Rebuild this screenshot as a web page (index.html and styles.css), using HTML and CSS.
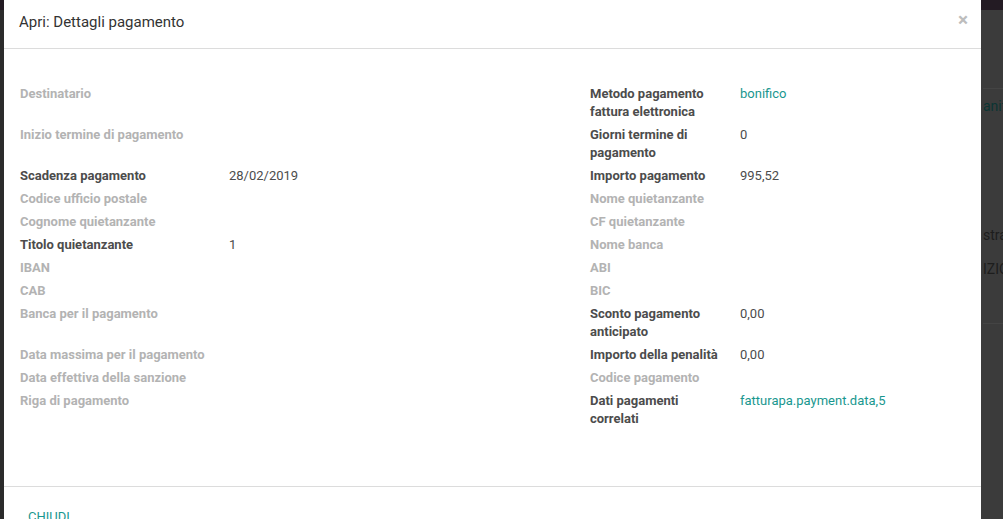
FILE: index.html
```html
<!DOCTYPE html>
<html lang="it">
  <head>
    <meta charset="UTF-8" />
    <title>Apri: Dettagli pagamento</title>
    <link rel="stylesheet" href="styles.css">
  </head>
  <body>
    <!-- page under the backdrop -->
    <div class="backdrop">
      <div class="bd-navbar"></div>
      <div class="bd-content">
        <div class="bd-row bd-first"><span class="bd-link">anifi</span></div>
        <div class="bd-row bd-stra">stra</div>
        <div class="bd-row bd-izio">IZIO</div>
        <div class="bd-row bd-last"></div>
      </div>
    </div>

    <div class="modal">
      <div class="modal-header">
        <h4 class="modal-title">Apri: Dettagli pagamento</h4>
        <span class="close">&times;</span>
      </div>

      <div class="modal-body">
        <table class="form-table">
          <colgroup>
            <col class="c-label-l">
            <col class="c-value-l">
            <col class="c-label-r">
            <col class="c-value-r">
          </colgroup>
          <tr>
            <td class="lbl empty">Destinatario</td>
            <td></td>
            <td class="lbl">Metodo pagamento fattura elettronica</td>
            <td><a class="link">bonifico</a></td>
          </tr>
          <tr>
            <td class="lbl empty">Inizio termine di pagamento</td>
            <td></td>
            <td class="lbl">Giorni termine di pagamento</td>
            <td>0</td>
          </tr>
          <tr>
            <td class="lbl">Scadenza pagamento</td>
            <td>28/02/2019</td>
            <td class="lbl">Importo pagamento</td>
            <td>995,52</td>
          </tr>
          <tr>
            <td class="lbl empty">Codice ufficio postale</td>
            <td></td>
            <td class="lbl empty">Nome quietanzante</td>
            <td></td>
          </tr>
          <tr>
            <td class="lbl empty">Cognome quietanzante</td>
            <td></td>
            <td class="lbl empty">CF quietanzante</td>
            <td></td>
          </tr>
          <tr>
            <td class="lbl">Titolo quietanzante</td>
            <td>1</td>
            <td class="lbl empty">Nome banca</td>
            <td></td>
          </tr>
          <tr>
            <td class="lbl empty">IBAN</td>
            <td></td>
            <td class="lbl empty">ABI</td>
            <td></td>
          </tr>
          <tr>
            <td class="lbl empty">CAB</td>
            <td></td>
            <td class="lbl empty">BIC</td>
            <td></td>
          </tr>
          <tr>
            <td class="lbl empty">Banca per il pagamento</td>
            <td></td>
            <td class="lbl">Sconto pagamento anticipato</td>
            <td>0,00</td>
          </tr>
          <tr>
            <td class="lbl empty">Data massima per il pagamento</td>
            <td></td>
            <td class="lbl">Importo della penalità</td>
            <td>0,00</td>
          </tr>
          <tr>
            <td class="lbl empty">Data effettiva della sanzione</td>
            <td></td>
            <td class="lbl empty">Codice pagamento</td>
            <td></td>
          </tr>
          <tr>
            <td class="lbl empty">Riga di pagamento</td>
            <td></td>
            <td class="lbl">Dati pagamenti correlati</td>
            <td><a class="link">fatturapa.payment.data,5</a></td>
          </tr>
        </table>
      </div>

      <div class="modal-footer">
        <button class="btn-close">Chiudi</button>
      </div>
    </div>
  </body>
</html>
```

FILE: styles.css
```css
* {
  margin: 0;
  padding: 0;
  box-sizing: border-box;
}

body {
  font-family: Roboto, "Noto Sans", sans-serif;
  font-size: 13px;
  color: #4c4c4c;
  background: #2b2b2b;
  width: 1003px;
  height: 519px;
  overflow: hidden;
  position: relative;
}

/* page behind the dark overlay */
.backdrop {
  height: 100%;
  display: flex;
  flex-direction: column;
}

.bd-navbar {
  height: 10px;
  background: #231b23;
}

.bd-content {
  flex: 1;
  margin-left: 4px;
  background: #3b3b3b;
  padding-left: 979px;
  white-space: nowrap;
  overflow: hidden;
  color: #1d1d1d;
  font-size: 14px;
}

.bd-row {
  line-height: 18px;
}

.bd-first {
  margin-top: 78px;
  padding-top: 8px;
  border-top: 1px solid #444;
}

.bd-link {
  color: #0b3533;
}

.bd-stra {
  margin-top: 111px;
}

.bd-izio {
  margin-top: 16px;
}

.bd-last {
  margin-top: 45px;
  border-top: 1px solid #444;
}

/* dialog */
.modal {
  position: absolute;
  top: 0;
  left: 4px;
  width: 977px;
  height: 560px;
  background: #ffffff;
  display: flex;
  flex-direction: column;
}

.modal-header {
  height: 49px;
  padding: 0 15px;
  display: flex;
  align-items: center;
  justify-content: space-between;
  border-bottom: 1px solid #dcdcdc;
}

.modal-title {
  font-size: 15px;
  font-weight: 400;
  color: #333333;
  margin-top: -4px;
}

.close {
  color: #bdbdbd;
  font-size: 19px;
  font-weight: 700;
  margin-top: -10px;
  margin-right: -2px;
}

.modal-body {
  height: 438px;
  padding: 36px 16px 0;
  border-bottom: 1px solid #dcdcdc;
}

.form-table {
  width: 100%;
  border-collapse: collapse;
  table-layout: fixed;
}

.c-label-l { width: 209px; }
.c-value-l { width: 361px; }
.c-label-r { width: 150px; }

.form-table td {
  vertical-align: top;
  line-height: 18px;
  padding: 0 15px 5px 0;
}

.lbl {
  font-weight: 700;
  color: #4c4c4c;
}

.lbl.empty {
  color: #b3b3b3;
}

.link {
  color: #19978f;
  text-decoration: none;
  cursor: pointer;
}

.modal-footer {
  padding: 22px 24px;
}

.btn-close {
  background: none;
  border: none;
  font-family: inherit;
  font-size: 13px;
  text-transform: uppercase;
  color: #19978f;
  cursor: pointer;
}
```
